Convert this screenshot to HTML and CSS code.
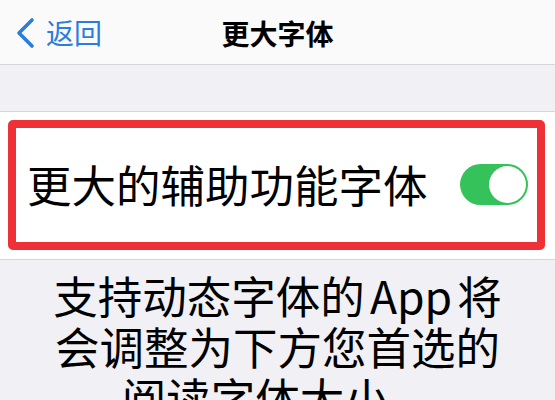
FILE: index.html
```html
<!DOCTYPE html>
<html lang="zh-CN">
<head>
<meta charset="utf-8">
<title>更大字体</title>
<link rel="stylesheet" href="styles.css">
</head>
<body>
<header class="nav">
  <a class="back" href="#">
    <svg class="chevron" width="20" height="32" viewBox="0 0 20 32" aria-hidden="true">
      <polyline points="16,3 3,16 16,29" fill="none" stroke="#2a7ddc" stroke-width="3.6" stroke-linecap="round" stroke-linejoin="round"/>
    </svg>
    <span class="back-label">返回</span>
  </a>
  <h1 class="title">更大字体</h1>
</header>
<div class="spacer"></div>
<section class="cell">
  <div class="highlight">
    <span class="label">更大的辅助功能字体</span>
    <span class="toggle"><span class="knob"></span></span>
  </div>
</section>
<p class="footer">支持动态字体的<span class="latin">App</span>将<br>会调整为下方您首选的<br>阅读字体大小。</p>
</body>
</html>
```
FILE: styles.css
```css
html, body {
  margin: 0;
  padding: 0;
  height: 100%;
  overflow: hidden;
}
body {
  background: #f0f0f5;
  font-family: "Noto Sans CJK SC", "Noto Sans", sans-serif;
  color: #000;
}
.nav {
  position: relative;
  height: 65px;
  background: #fafafa;
  border-bottom: 1px solid #d6d6da;
  display: flex;
  align-items: center;
  justify-content: center;
  box-sizing: border-box;
}
.back {
  position: absolute;
  left: 16px;
  top: 0;
  bottom: 0;
  display: flex;
  align-items: center;
  gap: 10px;
  text-decoration: none;
  color: #2a7ddc;
}
.chevron {
  display: block;
  margin-top: 1px;
}
.back-label {
  font-size: 28px;
  line-height: 1;
}
.title {
  margin: 0;
  font-size: 28px;
  font-weight: 600;
  line-height: 1;
  margin-top: 2px;
}
.spacer {
  height: 46px;
  border-bottom: 1px solid #d6d6da;
}
.cell {
  background: #fff;
  padding: 8px 10px 9px 8px;
  border-bottom: 1px solid #d6d6da;
}
.highlight {
  height: 130px;
  box-sizing: border-box;
  border: 8px solid #ee3136;
  border-radius: 5px;
  display: flex;
  align-items: center;
  justify-content: space-between;
  padding: 0 9px 2px 11px;
}
.label {
  font-size: 44.5px;
  line-height: 1;
}
.toggle {
  width: 68px;
  height: 41px;
  border-radius: 21px;
  background: #35c25a;
  display: flex;
  align-items: center;
  justify-content: flex-end;
  padding: 0 2px;
  box-sizing: border-box;
}
.knob {
  width: 37px;
  height: 37px;
  border-radius: 50%;
  background: #fff;
}
.footer {
  margin: 0;
  padding-top: 9px;
  font-size: 44.5px;
  line-height: 51px;
  text-align: center;
}
.latin {
  margin: 0 5px;
}
```
